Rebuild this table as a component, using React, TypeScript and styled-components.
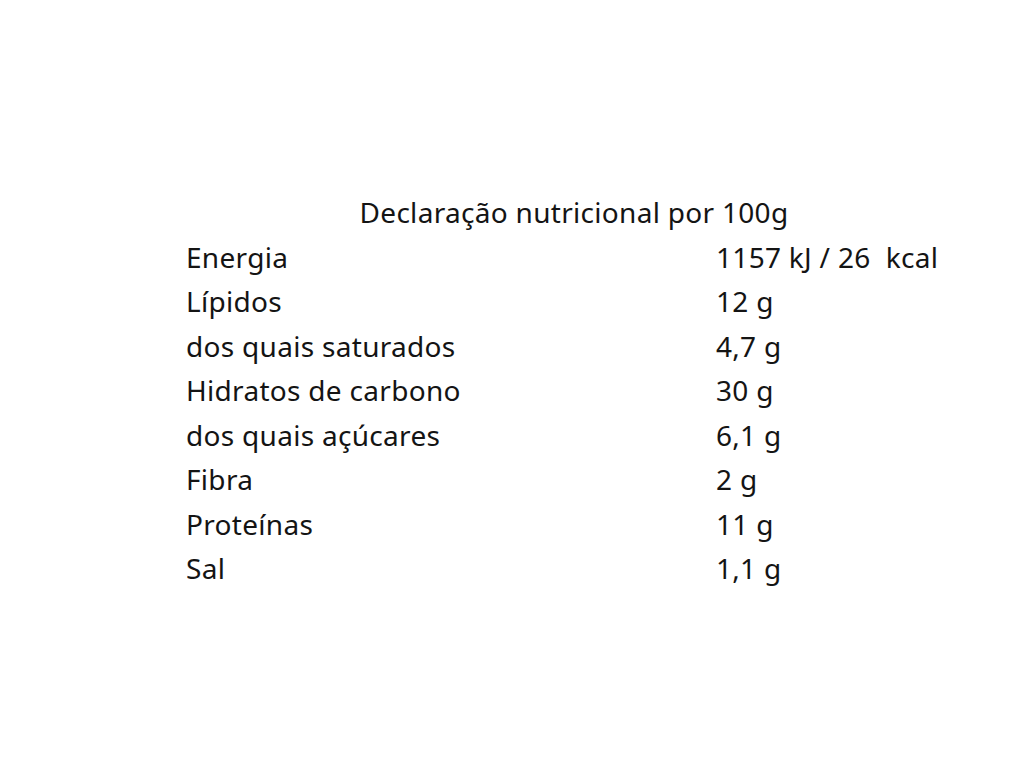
import React from "react";
import styled, { createGlobalStyle } from "styled-components";

const Global = createGlobalStyle`
  html, body { margin: 0; padding: 0; background: #ffffff; }
  body { font-family: "Noto Sans", "Open Sans", sans-serif; color: #141414; }
`;

const Page = styled.div`
  width: 1031px;
  height: 770px;
  display: flex;
  justify-content: flex-start;
  padding: 193px 0 0 186px;
  box-sizing: border-box;
`;

const Table = styled.div`
  width: 776px;
  display: grid;
  grid-template-columns: 530px 1fr;
  grid-auto-rows: 44.5px;
  font-size: 28px;
  line-height: 38px;
  letter-spacing: 0.3px;
`;

const Title = styled.div`
  grid-column: 1 / span 2;
  text-align: center;
`;

const Cell = styled.div`
  white-space: pre;
`;

const rows: [string, string][] = [
  ["Energia", "1157 kJ / 26  kcal"],
  ["Lípidos", "12 g"],
  ["dos quais saturados", "4,7 g"],
  ["Hidratos de carbono", "30 g"],
  ["dos quais açúcares", "6,1 g"],
  ["Fibra", "2 g"],
  ["Proteínas", "11 g"],
  ["Sal", "1,1 g"],
];

export default function App() {
  return (
    <>
      <Global />
      <Page>
        <Table>
          <Title>Declaração nutricional por 100g</Title>
          {rows.map(([k, v]) => (
            <React.Fragment key={k}>
              <Cell>{k}</Cell>
              <Cell>{v}</Cell>
            </React.Fragment>
          ))}
        </Table>
      </Page>
    </>
  );
}
